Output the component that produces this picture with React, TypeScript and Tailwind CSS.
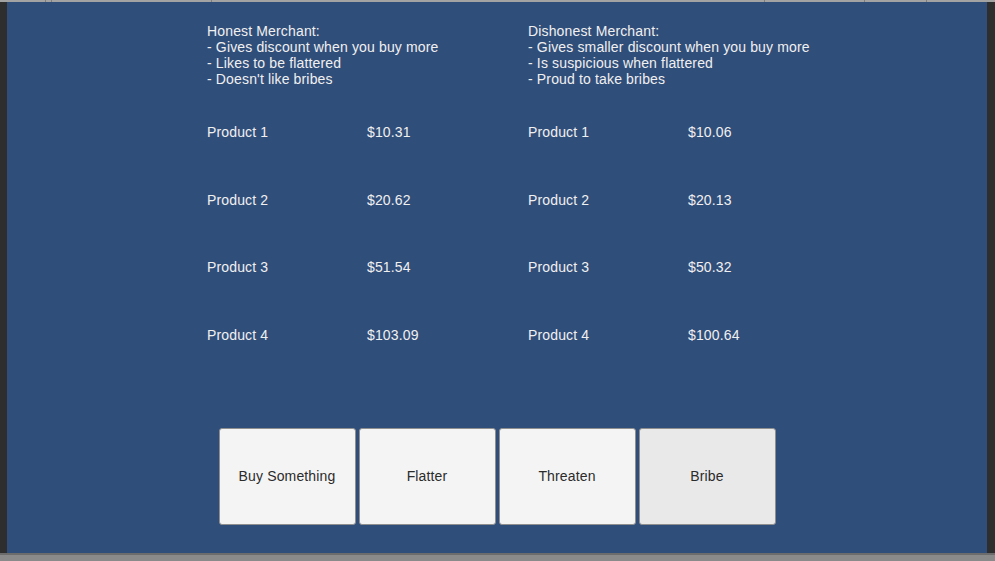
import React from 'react';

const honest = [
  { name: 'Product 1', price: '$10.31' },
  { name: 'Product 2', price: '$20.62' },
  { name: 'Product 3', price: '$51.54' },
  { name: 'Product 4', price: '$103.09' },
];

const dishonest = [
  { name: 'Product 1', price: '$10.06' },
  { name: 'Product 2', price: '$20.13' },
  { name: 'Product 3', price: '$50.32' },
  { name: 'Product 4', price: '$100.64' },
];

const MerchantColumn: React.FC<{ lines: string[]; products: { name: string; price: string }[] }> = ({ lines, products }) => (
  <div className="w-[321px] flex flex-col">
    <div className="flex flex-col">
      {lines.map((l) => (
        <p key={l} className="h-4 leading-4 whitespace-nowrap">{l}</p>
      ))}
    </div>
    <div className="mt-[37px] flex flex-col gap-[51.67px]">
      {products.map((p) => (
        <div key={p.name} className="flex h-4 leading-4">
          <span className="w-[160px]">{p.name}</span>
          <span>{p.price}</span>
        </div>
      ))}
    </div>
  </div>
);

const ActionButton: React.FC<{ label: string; active?: boolean }> = ({ label, active }) => (
  <button
    className={
      active
        ? 'w-[137px] h-[97px] rounded-[3px] border border-[#8f8f8f] bg-[#e9e9e9] text-[#2b2b2b] text-[14px]'
        : 'w-[137px] h-[97px] rounded-[3px] border border-[#8f8f8f] bg-[#f4f4f4] text-[#2b2b2b] text-[14px]'
    }
  >
    {label}
  </button>
);

export default function App() {
  return (
    <div className="w-[995px] h-[561px] flex flex-col bg-[#8a8a8a] overflow-hidden font-['Liberation_Sans',Arial,sans-serif]">
      {/* editor toolbar edge */}
      <div className="h-[2px] flex bg-[#a3a3a3]">
        <div className="w-[46px] border-r border-[#7d7d7d]" />
        <div className="w-[6px] border-r border-[#7d7d7d]" />
        <div className="w-[160px] border-r border-[#7d7d7d]" />
        <div className="w-[553px] border-r border-[#7d7d7d]" />
        <div className="w-[100px] border-r border-[#7d7d7d]" />
        <div className="w-[62px] border-r border-[#7d7d7d]" />
        <div className="flex-1" />
      </div>

      <div className="h-[551px] flex">
        <div className="w-[7px] bg-[#2e2e2e]" />
        <div className="flex-1 bg-[#304e7a] flex flex-col text-[14px] tracking-[0.15px] text-[#f0f0f0]">
          <div className="pl-[200px] pt-[21px] flex">
            <MerchantColumn
              lines={[
                'Honest Merchant:',
                '- Gives discount when you buy more',
                '- Likes to be flattered',
                "- Doesn't like bribes",
              ]}
              products={honest}
            />
            <MerchantColumn
              lines={[
                'Dishonest Merchant:',
                '- Gives smaller discount when you buy more',
                '- Is suspicious when flattered',
                '- Proud to take bribes',
              ]}
              products={dishonest}
            />
          </div>
          <div className="mt-[85px] flex justify-center gap-[3px]">
            <ActionButton label="Buy Something" />
            <ActionButton label="Flatter" />
            <ActionButton label="Threaten" />
            <ActionButton label="Bribe" active />
          </div>
        </div>
        <div className="w-[8px] bg-[#2e2e2e]" />
      </div>

      <div className="h-[2px] bg-[#6c6c6c]" />
      <div className="flex-1 bg-[#8a8a8a]" />
    </div>
  );
}
